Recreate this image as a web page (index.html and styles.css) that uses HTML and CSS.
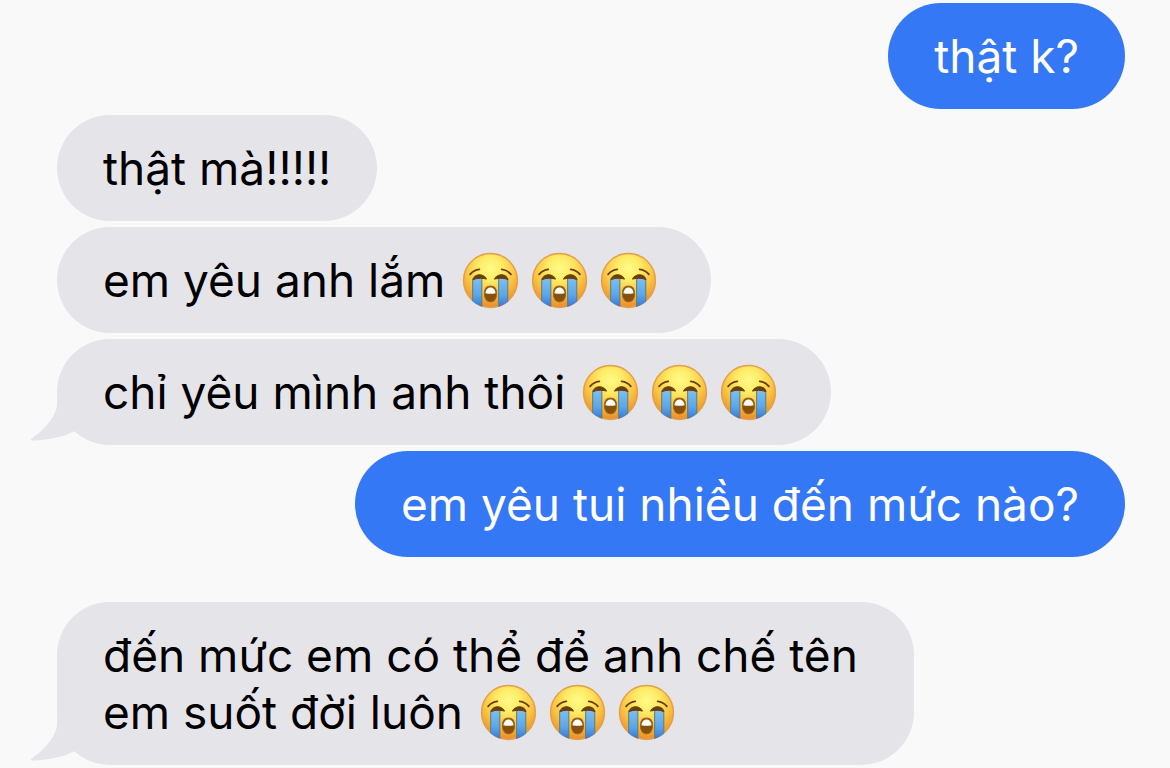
FILE: index.html
```html
<!DOCTYPE html>
<html lang="vi">
<head>
  <meta charset="UTF-8" />
  <meta name="viewport" content="width=device-width, initial-scale=1" />
  <title>Tin nhắn</title>
  <link rel="stylesheet" href="styles.css">
</head>
<body>
  <!-- Shared shapes -->
  <svg class="sprite" aria-hidden="true">
    <defs>
      <radialGradient id="face" cx="50%" cy="28%" r="72%">
        <stop offset="0" stop-color="#fffb86" />
        <stop offset="0.3" stop-color="#feec68" />
        <stop offset="0.6" stop-color="#fbc844" />
        <stop offset="1" stop-color="#e98c2b" />
      </radialGradient>
      <linearGradient id="tear" x1="0" y1="0" x2="0" y2="1">
        <stop offset="0" stop-color="#7fc0f3" />
        <stop offset="0.55" stop-color="#5ba6ec" />
        <stop offset="1" stop-color="#2f70cf" />
      </linearGradient>
      <clipPath id="round"><circle cx="28" cy="28" r="27" /></clipPath>
    </defs>
    <symbol id="cry" viewBox="0 0 56 56">
      <circle cx="28" cy="28" r="26.500" fill="url(#face)" stroke="#e3a04c" stroke-width="1.400" />
      <g clip-path="url(#round)">
        <path d="M10.500 25H19.500V56H10.500Z M36 25H45V56H36Z" fill="url(#tear)" />
        <path d="M10.500 26V50 M19.500 26V55 M36 26V55 M45 26V50" fill="none" stroke="#5f7f70" stroke-width="1" />
      </g>
      <g fill="none" stroke="#6b3f08" stroke-width="1.800" stroke-linecap="round">
        <path d="M8 22Q11.500 17.500 17 17" />
        <path d="M48 22Q44.500 17.500 39 17" />
      </g>
      <path d="M11 27C12.500 21 20.500 20.500 24 26.500C20 25.500 15 25.500 11 27Z M45 27C43.500 21 35.500 20.500 32 26.500C36 25.500 41 25.500 45 27Z" fill="#6b3f08" stroke="#6b3f08" stroke-width="1" stroke-linejoin="round" />
      <path d="M28 33.500C32 33.500 34 36.500 34 41C34 46 31.500 49 28 49C24.500 49 22 46 22 41C22 36.500 24 33.500 28 33.500Z" fill="#87500f" stroke="#a0661c" stroke-width="1" />
      <path d="M23 40.500C23.500 33 32.500 33 33 40.500Q28 41.500 23 40.500Z" fill="#fffdf5" />
    </symbol>
    <symbol id="tail" viewBox="0 0 60 48">
      <path d="M28 0V8C27 20 14 34 2 42Q1 44 4 43.500C18 43 35 40 46 34L60 40V0Z" fill="#e5e4e9" />
    </symbol>
  </svg>

  <main class="chat">
    <p class="bubble sent">thật k?</p>
    <p class="bubble received">thật mà!!!!!</p>
    <p class="bubble received">em yêu anh lắm <svg class="emoji" role="img" aria-label="khóc"><use href="#cry" /></svg><svg class="emoji" role="img" aria-label="khóc"><use href="#cry" /></svg><svg class="emoji" role="img" aria-label="khóc"><use href="#cry" /></svg></p>
    <p class="bubble received">
      <svg class="tail" aria-hidden="true"><use href="#tail" /></svg>chỉ yêu mình anh thôi <svg class="emoji" role="img" aria-label="khóc"><use href="#cry" /></svg><svg class="emoji" role="img" aria-label="khóc"><use href="#cry" /></svg><svg class="emoji" role="img" aria-label="khóc"><use href="#cry" /></svg>
    </p>
    <p class="bubble sent">em yêu tui nhiều đến mức nào?</p>
    <p class="bubble received later">
      <svg class="tail" aria-hidden="true"><use href="#tail" /></svg>đến mức em có thể để anh chế tên<br>em suốt đời luôn <svg class="emoji" role="img" aria-label="khóc"><use href="#cry" /></svg><svg class="emoji" role="img" aria-label="khóc"><use href="#cry" /></svg><svg class="emoji" role="img" aria-label="khóc"><use href="#cry" /></svg>
    </p>
  </main>
</body>
</html>
```
FILE: styles.css
```css
body {
  margin: 0;
  background-color: #f9f9f9;
  color: #000;
  font-family: Inter, "Liberation Sans", sans-serif;
  font-size: 46px;
  line-height: 57px;
}
.sprite {
  position: absolute;
  width: 0;
  height: 0;
}
.chat {
  display: flex;
  flex-direction: column;
  gap: 6px;
  padding: 3px 45px 3px 57px;
}
.bubble {
  position: relative;
  margin: 0;
  padding: 25px 46px 24px;
  border-radius: 53px;
}
.sent {
  align-self: flex-end;
  background-color: #3478f6;
  color: #fff;
}
.received {
  align-self: flex-start;
  background-color: #e5e4e9;
}
.later {
  margin-top: 39px;
  padding-right: 56px;
}
/* negative margins keep the line height the same as plain text */
.emoji {
  width: 57px;
  height: 57px;
  margin: -4px 8px -4px 4px;
  vertical-align: -8px;
}
/* sits over the bubble's lower left corner */
.tail {
  position: absolute;
  left: -28px;
  bottom: 0;
  width: 60px;
  height: 48px;
}
```
